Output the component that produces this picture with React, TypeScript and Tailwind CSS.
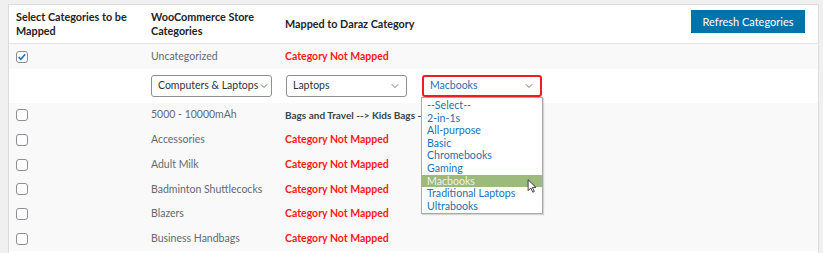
import { ChevronDown } from 'lucide-react';

const FONT = { fontFamily: 'Lato, "Liberation Sans", sans-serif' };

const ROW_GRID = 'grid grid-cols-[135px_134px_136px_1fr] items-center';

const ROWS: { name: string; mapped?: string }[] = [
  { name: '5000 - 10000mAh', mapped: 'Bags and Travel --> Kids Bags --' },
  { name: 'Accessories' },
  { name: 'Adult Milk' },
  { name: 'Badminton Shuttlecocks' },
  { name: 'Blazers' },
  { name: 'Business Handbags' },
];

const OPTIONS = [
  '--Select--',
  '2-in-1s',
  'All-purpose',
  'Basic',
  'Chromebooks',
  'Gaming',
  'Macbooks',
  'Traditional Laptops',
  'Ultrabooks',
];

function Checkbox({ checked }: { checked?: boolean }) {
  return (
    <span className="inline-flex h-[12px] w-[12px] items-center justify-center rounded-[3px] border border-[#8c8f94] bg-white">
      {checked && (
        <svg viewBox="0 0 12 12" className="h-[10px] w-[10px]">
          <path d="M2.2 6.2l2.4 2.6L9.8 2.6" fill="none" stroke="#2271b1" strokeWidth="2" />
        </svg>
      )}
    </span>
  );
}

function FakeSelect({ label, width, active }: { label: string; width: string; active?: boolean }) {
  return (
    <div
      className={`${width} flex h-[22px] items-center justify-between rounded-[3px] bg-white pl-[6px] pr-[5px] text-[10.5px] ${
        active ? 'border-2 border-[#ee1c25] text-[#2271b1]' : 'border border-[#8c8f94] text-[#2c3338]'
      }`}
    >
      <span className="whitespace-nowrap">{label}</span>
      <ChevronDown size={12} strokeWidth={1.6} className="shrink-0 text-[#50575e]" />
    </div>
  );
}

export default function App() {
  return (
    <div style={FONT} className="h-[253px] w-[823px] overflow-hidden bg-[#f0f0f1] pl-[8px] pr-[4px] pt-[4px]">
      <div className="relative h-[260px] border border-[#dcdcde] bg-white">
        {/* header */}
        <div className={`${ROW_GRID} h-[39px] border-b border-[#e2e4e7] text-[10.8px] font-bold leading-[14px] text-[#1d2327]`}>
          <div className="pl-[7px]">Select Categories to be Mapped</div>
          <div className="pl-[7px]">WooCommerce Store Categories</div>
          <div className="whitespace-nowrap pl-[7px]">Mapped to Daraz Category</div>
          <div className="flex justify-end self-start pr-[13px] pt-[5px]">
            <button className="h-[23px] w-[114px] bg-[#0073aa] text-[11px] font-normal text-white">
              Refresh Categories
            </button>
          </div>
        </div>

        {/* selected row */}
        <div className={`${ROW_GRID} h-[25px] bg-[#f9f9f9] text-[10.5px]`}>
          <div className="flex pl-[7px]">
            <Checkbox checked />
          </div>
          <div className="pl-[7px] text-[#646970]">Uncategorized</div>
          <div className="whitespace-nowrap pl-[7px] font-bold text-[#ff1a1a]">Category Not Mapped</div>
          <div />
        </div>

        {/* mapping selects */}
        <div className={`${ROW_GRID} h-[34px] bg-white`}>
          <div />
          <div className="pl-[7px]">
            <FakeSelect label="Computers & Laptops" width="w-[121px]" />
          </div>
          <div className="pl-[8px]">
            <FakeSelect label="Laptops" width="w-[121px]" />
          </div>
          <div className="relative pl-[8px]">
            <FakeSelect label="Macbooks" width="w-[120px]" active />
            <div className="absolute left-[7px] top-[22px] z-10 w-[122px] border border-[#a7aaad] bg-white py-[1px] text-[10.6px] leading-[12.6px] text-[#2271b1] shadow-[1px_1px_1px_rgba(0,0,0,0.15)]">
              {OPTIONS.map((o) => (
                <div
                  key={o}
                  className={`whitespace-nowrap pl-[5px] ${o === 'Macbooks' ? 'bg-[#9cba7c] text-[#eef3e8]' : ''}`}
                >
                  {o}
                </div>
              ))}
              <svg viewBox="0 0 12 18" className="absolute left-[105px] top-[81px] h-[14px] w-[10px]">
                <path d="M1 1v14l3.5-3.5 2.5 5.5 2-1-2.5-5.2H11z" fill="#fff" stroke="#111" strokeWidth="1" />
              </svg>
            </div>
          </div>
        </div>

        {/* category rows */}
        {ROWS.map((r) => (
          <div key={r.name} className={`${ROW_GRID} h-[24.7px] bg-[#f9f9f9] text-[10.5px]`}>
            <div className="flex pl-[7px]">
              <Checkbox />
            </div>
            <div className="whitespace-nowrap pl-[7px] text-[#646970]">{r.name}</div>
            {r.mapped ? (
              <div className="whitespace-nowrap pl-[7px] text-[10px] font-bold text-[#3c434a]">{r.mapped}</div>
            ) : (
              <div className="whitespace-nowrap pl-[7px] font-bold text-[#ff1a1a]">Category Not Mapped</div>
            )}
            <div />
          </div>
        ))}
      </div>
    </div>
  );
}
